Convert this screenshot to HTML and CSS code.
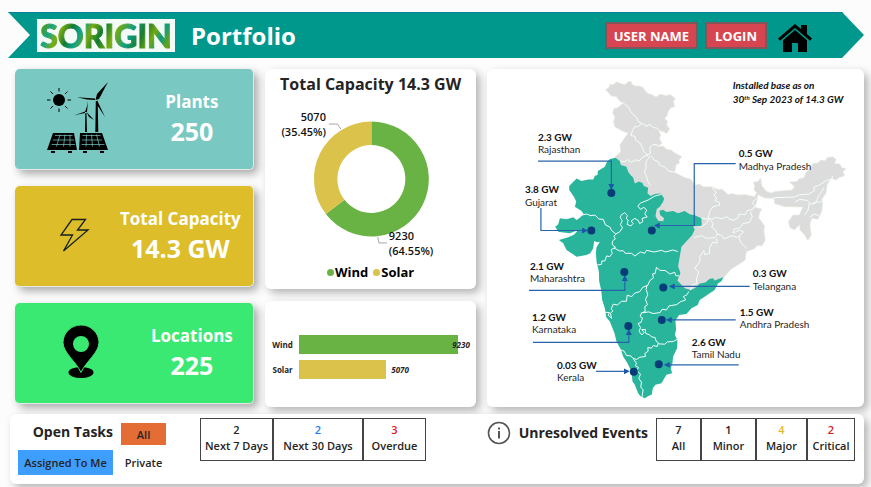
FILE: index.html
```html
<!DOCTYPE html>
<html lang="en">
<head>
<meta charset="utf-8">
<title>Sorigin Portfolio</title>
<link rel="stylesheet" href="styles.css">
</head>
<body>
<header class="banner">
  <span class="logo"><span class="logo-text">SORIGIN</span></span>
  <h1 class="banner-title">Portfolio</h1>
  <nav class="banner-actions">
    <button class="banner-button" type="button">USER NAME</button>
    <button class="banner-button" type="button">LOGIN</button>
    <a class="home" href="#" aria-label="Home">
      <svg width="34" height="29" viewBox="0 0 34 29">
        <path d="M0 14.500 17 0l6 5V1h6v9l5 4.500-2 2.300L17 4 2 16.800Z"/>
        <path d="M5 16.200 17 6l12 10.200V28h-9v-9h-6v9H5Z"/>
      </svg>
    </a>
  </nav>
</header>

<main class="board">
  <section class="kpis">
    <article class="kpi kpi-plants">
      <svg class="kpi-icon" width="62" height="72" viewBox="46 84 62 72">
        <circle cx="59" cy="102" r="6"/>
        <path class="thin" d="M59 90v3.500M59 110.500v3.500M47 102h3.500M67.500 102h3.500M50.500 93.500l2.500 2.500M65 108l2.500 2.500M50.500 110.500l2.500-2.500M65 96l2.500-2.500"/>
        <path d="m95.500 102 1.500-6 11-12-9 17ZM95 100.500 77 99.300l10 2.200 8 .5ZM97 102l8 17-7.500-11.500ZM95.800 103h1.900l.6 31h-3Z"/>
        <path d="m85 114 2-6 1-5-1 11ZM85 113.500l-11 4 6-1.500 5-1ZM86.500 114l7.500 8-5-3ZM85.300 115h1.200l.5 19h-2Z"/>
        <path d="M53 135h21l3 17H47ZM80 135h22l6 17H79Z"/>
        <path class="kpi-grid" d="M55 137.500h17.500M53 142h21M51.500 146.500h23.500M60 136.500l-3.500 12M65 136.500l-1.500 12M70 136.500v12M82.500 137.500h18M82 142h20M81.500 146.500h23M86.500 136.500l-.5 12M91.500 136.500l1 12M96.500 136.500l3 12"/>
        <path d="M51 153h4v2h-4ZM68 153h4v2h-4ZM83 153h4v2h-4ZM100 153h4v2h-4Z"/>
      </svg>
      <div class="kpi-text"><h2>Plants</h2><p>250</p></div>
    </article>
    <article class="kpi kpi-capacity">
      <svg class="kpi-icon" width="62" height="36" viewBox="46 222 62 36">
        <path class="bolt" d="M72 224.500h13.500L77.500 235h10.500L63.500 256l9-16h-11.500Z"/>
      </svg>
      <div class="kpi-text"><h2>Total Capacity</h2><p>14.3 GW</p></div>
    </article>
    <article class="kpi kpi-locations">
      <svg class="kpi-icon" width="62" height="54" viewBox="46 326 62 54">
        <ellipse cx="81" cy="373.500" rx="12.500" ry="5.500"/>
        <path class="pin" d="M81 373.500c-5-11-18-20-18-30a18 17.500 0 0 1 36 0c0 10-13 19-18 30Z"/>
        <circle class="pin-hole" cx="81" cy="345" r="8"/>
      </svg>
      <div class="kpi-text"><h2>Locations</h2><p>225</p></div>
    </article>
  </section>

  <section class="charts">
    <article class="card donut-card">
      <h2>Total Capacity 14.3 GW</h2>
      <svg class="donut" viewBox="265 100 212 162" role="img" aria-label="Wind 9230, Solar 5070">
        <path class="wind" d="M371.500 121.500a57.500 57.500 0 1 1-45.600 92.500l18.700-14.200A34 34 0 1 0 371.500 145Z"/>
        <path class="solar" d="M371.500 121.500a57.500 57.500 0 0 0-45.600 92.500l18.700-14.200A34 34 0 0 1 371.500 145Z"/>
        <path class="leader" d="M329 124h8.500l3.500 5M378 237l1 6h8"/>
        <text x="326" y="121" text-anchor="end">5070</text>
        <text x="326" y="136" text-anchor="end">(35.45%)</text>
        <text x="389" y="240">9230</text>
        <text x="389" y="255">(64.55%)</text>
      </svg>
      <ul class="legend"><li class="legend-wind">Wind</li><li class="legend-solar">Solar</li></ul>
    </article>
    <article class="card bars-card">
      <div class="bar-row"><span class="bar-label">Wind</span><div class="track"><div class="bar bar-wind" style="width:92.3%"></div><span class="bar-value over">9230</span></div></div>
      <div class="bar-row"><span class="bar-label">Solar</span><div class="track"><div class="bar bar-solar" style="width:50.7%"></div><span class="bar-value">5070</span></div></div>
    </article>
  </section>

  <section class="card map-card">
    <svg class="map" viewBox="487 69 377 338" role="img" aria-label="Installed base by state">
      <defs>
        <marker id="arrow" viewBox="0 0 6 6" refX="2" refY="3" markerWidth="6" markerHeight="6" markerUnits="userSpaceOnUse" orient="auto"><path class="arrow" d="M0 0 6 3 0 6Z"/></marker>
      </defs>
      <g transform="translate(485 60) scale(.33333)">
        <path class="land" d="M362 88 372 82 375 72 385 74 395 65 408 70 420 73 430 65 440 64 441 72 452 78 462 77 475 82 483 94 490 100 502 103 510 110 518 108 525 102 545 106 556 103 572 115 566 124 570 140 558 143 550 155 547 166 540 175 549 184 545 193 555 207 545 220 534 214 522 212 528 225 524 235 532 250 515 259 535 258 545 267 560 270 566 276 592 290 582 300 585 308 574 315 570 337 600 352 618 357 630 375 645 372 655 380 680 380 700 388 712 387 730 403 742 400 760 405 780 403 810 410 816 398 808 390 810 378 806 366 820 364 828 354 832 378 846 394 862 399 870 394 922 390 930 380 915 366 936 364 945 355 958 353 964 338 980 322 984 310 998 309 1010 300 1022 302 1028 292 1045 290 1055 298 1050 310 1066 312 1072 323 1085 325 1075 335 1080 347 1065 352 1055 360 1040 355 1028 373 1024 400 1011 418 1014 432 1012 453 1000 478 982 475 976 492 980 525 970 542 960 525 946 510 945 494 930 510 916 503 911 485 925 465 944 465 955 441 900 440 870 431 868 415 840 414 820 404 815 430 810 442 832 447 825 458 822 473 840 498 838 515 842 540 832 558 818 556 810 566 785 575 782 600 760 615 740 627 720 650 690 665 630 690 600 692 520 620 460 470 405 310 390 291 408 275 405 255 420 232 430 219 410 212 390 200 386 185 390 170 383 158 387 145 398 143 413 130 402 120 395 110 378 107 372 99Z"/>
        <path class="state" d="M375 297 392 293 405 303 408 315 425 320 430 335 437 345 445 352 450 370 462 364 473 369 477 378 490 383 488 400 498 408 510 402 528 400 538 415 535 425 525 440 516 447 512 468 520 482 535 484 538 475 526 465 524 452 535 449 545 456 565 453 580 460 600 453 615 463 630 466 650 475 651 497 625 499 630 509 622 526 608 541 590 560 585 590 580 619 587 639 578 662 600 685 618 690 630 685 645 671 662 668 674 657 685 655 690 662 717 651 710 664 700 670 690 690 675 700 663 708 645 720 639 735 620 745 605 762 583 765 572 782 574 810 570 825 578 840 577 865 565 890 563 910 558 925 562 940 545 945 530 970 512 975 504 985 501 1004 488 1010 480 1015 467 1009 460 1000 450 975 443 965 440 935 428 910 415 890 408 869 395 845 389 820 375 785 364 771 360 745 352 720 349 690 343 665 342 635 335 605 333 578 335 562 345 545 337 547 328 543 325 565 316 580 305 585 275 590 245 570 235 550 222 540 235 536 250 532 267 524 280 510 255 520 230 517 220 515 211 500 220 493 225 475 245 478 265 472 275 480 285 473 296 462 290 453 270 440 274 424 267 410 253 390 253 378 275 355 290 363 310 358 325 358 330 347 338 345 339 333 360 320 365 308Z"/>
        <path class="borders" d="M292 465 305 462 318 467 330 465 342 477 355 478 362 495 375 501 380 511 393 522 387 530 392 536 383 543 382 554 392 562 379 569 382 580 375 590 365 588 360 603 351 603 350 613 338 615M393 522 405 515 413 503 407 494 412 482 406 472 410 464 420 458 428 467 424 475 430 480 427 493 438 498 445 490 439 483 450 475 461 482 464 491 474 485 472 475 487 471 480 461 486 450 477 442 467 448 459 438 467 429 490 420 510 408 530 403M387 564 405 573 415 572 421 580 440 580 450 588 467 576 480 580 485 571 508 576 530 571 542 576 565 570 579 575M583 648 573 647 570 637 555 642 542 632 525 631 515 622 511 641 503 642 506 654 495 662 489 676 474 682 465 695 449 700 441 710 427 706 425 724 410 724 398 735 385 733 379 748 384 753 377 760 380 775 370 766 374 758 360 757M487 675 484 688 489 705 482 718 488 735 480 740 481 755 470 759 492 756 505 761 526 758 532 748 545 750 553 738 576 734 588 725 603 720 596 710 607 704 612 695M470 759 466 770 473 774 469 787 460 791 467 803 463 815 471 825 478 818 471 809 482 809 482 820 494 825 501 831 511 833 514 844 521 849 517 860 505 857 500 865 489 863 490 874 480 881 482 890 465 892 455 899 444 895 438 888 425 887 418 874 402 868M521 852 540 853 548 846 565 845 578 838M446 898 455 910 452 918 461 923 456 932 467 943 462 956 470 967 468 982 475 990 471 1015"/>
        <path class="borders" d="M400 128 415 128 423 135 432 142 437 154 445 163 455 171 460 184 472 190 484 198 495 193 506 202 516 204 528 215M470 192 458 200 449 200 443 212 438 226 451 229 452 240 465 248 472 261 477 275 487 284 497 281 495 263 505 253 518 254M406 303 420 305 428 298 438 307 452 299 462 303 474 291 490 284M496 287 488 299 483 308 484 322 479 335 485 348 488 362 498 376M500 288 507 299 520 305 526 316 540 321 552 333 572 337M682 384 695 396 688 406 697 413 690 421 705 428 704 436 685 440 675 454 670 475 685 477 691 472 711 476 728 470 733 477 747 481 760 473 762 462 782 464 788 451 804 448 810 437 802 428 815 415M650 474 672 478 665 490 645 503M674 479 686 490 681 502 692 509 698 523 690 533 666 535 650 527 628 533M697 523 710 525 718 537 742 527 758 532 767 525 777 516 765 510 745 519 747 508 766 503 774 491 794 487 803 470 797 455M766 526 763 536 770 550 786 565M696 535 697 549 684 547 675 563 674 580 660 584 657 572 645 590 646 603 630 625 642 636 635 657 636 671 622 675 617 691M866 413 930 411 945 404 974 402 990 391 987 382 1004 375 1028 360 1042 359 1044 347M1018 382 1012 394 1002 407 995 425 980 433 968 421 945 418 931 427M974 430 970 452 960 465M985 432 1000 425 1010 427M975 472 990 462 1002 466"/>
      </g>
      <g class="connectors">
        <path d="M538 161H611.500V186"/><path d="M541 208V230.500H584"/><path d="M736 163.500H694.500V225.500H658"/>
        <path d="M529 290.500H625V279"/><path d="M533 342.500H629V333"/><path d="M596 371.500H626"/>
        <path d="M739 365H668"/><path d="M736 320H670"/><path d="M750 286.500H673"/>
      </g>
      <g class="dots">
        <circle cx="611.500" cy="193" r="4"/><circle cx="591.500" cy="230.500" r="4"/><circle cx="652" cy="230.500" r="4"/>
        <circle cx="624.500" cy="272" r="4"/><circle cx="628.500" cy="326" r="4"/><circle cx="634" cy="372" r="4"/>
        <circle cx="659" cy="364.500" r="4"/><circle cx="662" cy="320" r="4"/><circle cx="663.500" cy="287.500" r="4"/>
      </g>
      <g class="amount">
        <text x="538" y="141">2.3 GW</text><text x="525" y="193">3.8 GW</text><text x="739" y="157">0.5 GW</text>
        <text x="530" y="270">2.1 GW</text><text x="532" y="321">1.2 GW</text><text x="557" y="369">0.03 GW</text>
        <text x="692" y="346">2.6 GW</text><text x="740" y="316">1.5 GW</text><text x="753" y="277">0.3 GW</text>
      </g>
      <g class="place">
        <text x="538" y="153">Rajasthan</text><text x="525" y="206">Gujarat</text><text x="739" y="170">Madhya Pradesh</text>
        <text x="530" y="282">Maharashtra</text><text x="532" y="333">Karnataka</text><text x="557" y="381">Kerala</text>
        <text x="692" y="358">Tamil Nadu</text><text x="740" y="328">Andhra Pradesh</text><text x="753" y="290">Telangana</text>
      </g>
      <g class="note">
        <text x="733" y="89">Installed base as on</text>
        <text x="733" y="103">30<tspan class="sup" dy="-3">th</tspan><tspan dy="3"> Sep 2023 of 14.3 GW</tspan></text>
      </g>
    </svg>
  </section>
</main>

<footer class="card status">
  <section class="tasks">
    <h2>Open Tasks</h2>
    <button class="filter filter-all" type="button">All</button>
    <button class="filter filter-mine" type="button">Assigned To Me</button>
    <button class="filter" type="button">Private</button>
  </section>
  <ul class="counts task-counts">
    <li><b>2</b>Next 7 Days</li>
    <li><b class="blue">2</b>Next 30 Days</li>
    <li><b class="red">3</b>Overdue</li>
  </ul>
  <section class="events">
    <svg width="24" height="24" viewBox="0 0 24 24" aria-hidden="true">
      <circle class="info-ring" cx="12" cy="12" r="10.500"/>
      <path class="info-mark" d="M12 10v7.500M12 6.500v2"/>
    </svg>
    <h2>Unresolved Events</h2>
  </section>
  <ul class="counts event-counts">
    <li><b>7</b>All</li>
    <li><b>1</b>Minor</li>
    <li><b class="yellow">4</b>Major</li>
    <li><b class="red">2</b>Critical</li>
  </ul>
</footer>
</body>
</html>
```
FILE: styles.css
```css
* { box-sizing: border-box; }
body {
  margin: 0;
  min-height: 100vh;
  padding: 12px 7px 3px 8px;
  display: flex;
  flex-direction: column;
  background: #fcfcfc;
  color: #252423;
  font-family: "Open Sans", "Noto Sans", sans-serif;
}
h1, h2, p, ul { margin: 0; padding: 0; }
ul { list-style: none; }
button { font-family: inherit; }

.banner {
  display: flex;
  align-items: center;
  height: 46px;
  padding: 0 52px 0 29px;
  background: #00988c;
  border-top: 1px solid #0b7f98;
  clip-path: polygon(0 0, calc(100% - 22px) 0, 100% 50%, calc(100% - 22px) 100%, 0 100%, 22px 50%);
}
.logo {
  width: 138px;
  height: 33px;
  display: flex;
  align-items: center;
  justify-content: center;
  background: #f4fbf7;
}
.logo-text {
  font: 900 32px/32px Lato, sans-serif;
  color: transparent;
  -webkit-text-stroke: 1px transparent;
  background: linear-gradient(115deg, #4f9a1c 0 4%, #18a487 10%, #7cae0e 17%, #147a35 24%, #0fa18b 31%, #76a90f 38%, #0f7a33 46%, #7bad0c 55%, #109c82 66%, #1b7c2d 74%, #73a80f 82%, #0e9a80 88%, #6da40f 95%, #1a7a2d);
  background-clip: text;
  -webkit-background-clip: text;
}
.banner-title { margin-left: 16px; font-size: 24px; line-height: 32px; color: #fff; }
.banner-actions { margin-left: auto; display: flex; align-items: center; gap: 7px; }
.banner-button {
  height: 27px;
  padding: 0 7px;
  border: 2px solid #80565a;
  background: #d64550;
  color: #fff;
  font-size: 13px;
  font-weight: 700;
  line-height: 20px;
}
.banner-button + .banner-button { padding: 0 8px; }
.home { display: flex; margin-left: 4px; padding-top: 5px; }

.board {
  display: grid;
  grid-template-columns: 239fr 212fr 377fr;
  gap: 11px;
  flex: 1;
  margin: 11px 0 7px 7px;
}
.card { background: #fff; border-radius: 6px; box-shadow: 4px 4px 8px #b4b4b4; }

.kpis { display: grid; grid-template-rows: repeat(3, 1fr); gap: 16px; padding-bottom: 3px; }
.kpi {
  display: flex;
  align-items: center;
  padding: 0 12px 2px 31px;
  border: 1px solid #e4e9e7;
  border-left-width: 0;
  border-top-width: 0;
  border-radius: 5px;
  box-shadow: 4px 4px 8px #aaa;
  color: #fff;
}
.kpi-plants { background: #79c8c2; }
.kpi-capacity { background: #ddbd2a; }
.kpi-locations { background: #39e972; }
.kpi-icon { flex: none; fill: #000; }
.kpi-text { flex: 1; text-align: center; white-space: nowrap; margin-left: 24px; }
.kpi-capacity .kpi-text { margin-left: 12px; }
.kpi-plants, .kpi-locations { padding-right: 1px; }
.kpi h2 { font-size: 17px; line-height: 26px; }
.kpi p { font-size: 25px; line-height: 32px; font-weight: 700; }
.thin { fill: none; stroke: #000; }
.kpi-grid { fill: none; stroke: #79c8c2; stroke-width: 0.7; }
.bolt { fill: none; stroke: #16201c; stroke-width: 1.3; }
.pin { stroke: #39e972; stroke-width: 1; }
.pin-hole { fill: #39e972; }

.charts { display: grid; grid-template-rows: 220fr 106fr; gap: 12px; }
.donut-card { display: flex; flex-direction: column; align-items: center; padding-top: 3px; }
.donut-card h2 { font-size: 16px; line-height: 24px; white-space: nowrap; }
.donut { display: block; width: 100%; flex: 1; min-height: 0; margin-top: 4px; }
.donut text { font-size: 11px; font-weight: 600; fill: #111; }
.wind, .bar-wind { fill: #69b345; background: #69b345; }
.solar, .bar-solar { fill: #dbc24b; background: #dbc24b; }
.leader { fill: none; stroke: #a6a6a6; }
.legend { display: flex; gap: 5px; padding-bottom: 6px; font-size: 13px; line-height: 21px; font-weight: 700; color: #000; }
.legend li { display: flex; align-items: center; gap: 1px; }
.legend li::before { content: ""; width: 7px; height: 7px; border-radius: 50%; background: #69b345; }
.legend .legend-solar::before { background: #dbc24b; }
.bars-card { display: flex; flex-direction: column; justify-content: center; gap: 6px; padding: 6px 5px 0 7px; }
.bar-row { display: grid; grid-template-columns: 21px 1fr; gap: 6px; align-items: center; }
.bar-label { font-size: 8px; font-weight: 700; text-align: right; }
.track { display: flex; align-items: center; }
.bar { height: 19px; flex: none; }
.bar-value { margin-left: 5px; font-size: 8px; font-weight: 700; font-style: italic; }
.bar-value.over { margin-left: -6px; }

.map-card { display: flex; }
.map { width: 100%; height: 100%; }
.map text { font-family: Lato, sans-serif; font-size: 10px; fill: #262626; }
.map .amount text { font-weight: 700; fill: #111; }
.map .note text { font-weight: 700; font-style: italic; fill: #111; }
.map .sup { font-size: 6px; }
.land { fill: #dcdcdc; stroke: #e9eee0; stroke-width: 2; }
.state { fill: #29b59b; }
.borders { fill: none; stroke: #f2fffb; stroke-width: 3; stroke-linejoin: round; }
.connectors path { fill: none; stroke: #2862ac; marker-end: url(#arrow); }
.connectors, .arrow { stroke-width: 1.2; }
.map .arrow { fill: #1c58a8; stroke: none; }
.dots { fill: #063c77; }

.status {
  display: flex;
  align-items: flex-start;
  height: 70px;
  margin-left: 2px;
  padding: 4px 9px 0 8px;
}
.status h2 { font-size: 14px; line-height: 24px; font-weight: 700; white-space: nowrap; }
.tasks { display: grid; grid-template-columns: 95px 45px; gap: 5px 8px; align-items: center; }
.tasks h2 { text-align: right; }
.filter { height: 25px; padding: 0; border: 0; background: none; color: #252423; font-size: 11px; font-weight: 600; white-space: nowrap; }
.filter-all { height: 22px; margin-top: 5px; background: #e46c35; }
.filter-mine { background: #3e9efd; }
.counts { display: grid; font-size: 11px; line-height: 16px; font-weight: 600; text-align: center; white-space: nowrap; }
.counts li { height: 43px; padding-top: 3px; border: 1px solid #444; }
.counts li + li { border-left-width: 2px; margin-left: -1px; }
.counts b { display: block; font-weight: 600; }
.task-counts { margin-left: 34px; grid-template-columns: 73px 90px 63px; }
.event-counts { grid-template-columns: 45px 55px 51px 48px; }
.blue { color: #1b82e8; }
.red { color: #d6201f; }
.yellow { color: #e3b92c; }
.events { display: flex; align-items: center; gap: 8px; margin: 3px 8px 0 auto; }
.info-ring { fill: none; stroke: #555; stroke-width: 1.6; }
.info-mark { stroke: #555; stroke-width: 2; }
```
